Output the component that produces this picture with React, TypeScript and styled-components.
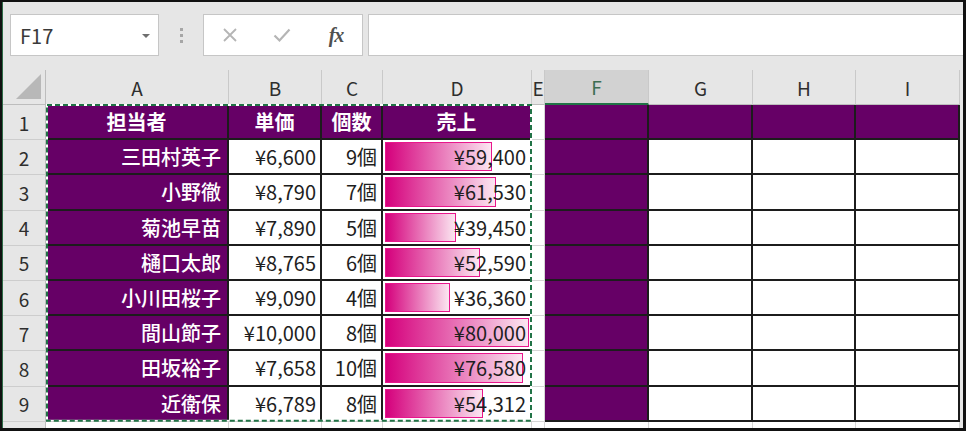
import React from 'react';
import styled, { createGlobalStyle, css } from 'styled-components';

const GlobalStyle = createGlobalStyle`
  html, body { margin: 0; padding: 0; background: #fff; }
  body { font-family: "Noto Sans CJK JP", "Noto Sans", sans-serif; }
`;

const PURPLE = '#660066';
const DARK = '#1c1c1c';
const GREEN = '#217346';

const COLS = [183, 93, 61, 149, 13, 104, 104, 103, 104];
const LETTERS = ['A', 'B', 'C', 'D', 'E', 'F', 'G', 'H', 'I'];
const ROW_H = 35.2;
const HEAD_H = 35;
const ROWHEAD_W = 43;

const rows: [string, number, number, number][] = [
  ['三田村英子', 6600, 9, 59400],
  ['小野徹', 8790, 7, 61530],
  ['菊池早苗', 7890, 5, 39450],
  ['樋口太郎', 8765, 6, 52590],
  ['小川田桜子', 9090, 4, 36360],
  ['間山節子', 10000, 8, 80000],
  ['田坂裕子', 7658, 10, 76580],
  ['近衛保', 6789, 8, 54312],
];

const yen = (n: number) => '¥' + n.toLocaleString('en-US');
const maxSales = Math.max(...rows.map(r => r[3]));
const BAR_MAX = 144;

const Frame = styled.div`
  box-sizing: border-box;
  width: 966px;
  height: 431px;
  border: 2px solid #111;
  border-right-width: 3px;
  border-bottom-width: 3px;
  background: #e6e6e6;
  overflow: hidden;
`;

const Inner = styled.div`
  height: 100%;
  border-left: 1px solid #2d6b47;
  display: flex;
  flex-direction: column;
`;

const Toolbar = styled.div`
  height: 68px;
  flex: none;
  display: flex;
  align-items: flex-start;
  padding: 12px 0 0 7px;
  box-sizing: border-box;
`;

const NameBox = styled.div`
  box-sizing: border-box;
  width: 149px;
  height: 42px;
  background: #fff;
  border: 1px solid #c6c6c6;
  display: flex;
  align-items: center;
  justify-content: space-between;
  padding: 0 8px 0 9px;
  font-size: 20px;
  color: #3a3a3a;
`;

const DropArrow = styled.span`
  width: 0;
  height: 0;
  border-left: 4px solid transparent;
  border-right: 4px solid transparent;
  border-top: 4px solid #6f6f6f;
  margin-top: 2px;
`;

const Grip = styled.div`
  width: 44px;
  height: 42px;
  display: flex;
  flex-direction: column;
  align-items: center;
  justify-content: center;
  gap: 3px;
`;

const GripDot = styled.span`
  width: 3px;
  height: 3px;
  background: #a6a6a6;
`;

const FxBox = styled.div`
  box-sizing: border-box;
  width: 160px;
  height: 42px;
  background: #fff;
  border: 1px solid #c6c6c6;
  display: grid;
  grid-template-columns: repeat(3, 52px);
  align-items: center;
  justify-items: center;
`;

const FxLabel = styled.span`
  font-family: "Liberation Serif", "DejaVu Serif", serif;
  font-style: italic;
  font-weight: bold;
  font-size: 20px;
  color: #505050;
  letter-spacing: -1px;
  margin-left: 4px;
`;

const FormulaInput = styled.div`
  flex: 1;
  height: 42px;
  box-sizing: border-box;
  margin-left: 5px;
  background: #fff;
  border: 1px solid #c6c6c6;
  border-right: none;
`;

const Sheet = styled.div`
  position: relative;
  flex: 1;
  overflow: hidden;
`;

const Grid = styled.div`
  display: grid;
  grid-template-columns: ${ROWHEAD_W}px ${COLS.map(c => c + 'px').join(' ')};
  grid-template-rows: ${HEAD_H}px;
  grid-auto-rows: ${ROW_H}px;
  width: ${ROWHEAD_W + COLS.reduce((a, b) => a + b, 0)}px;
`;

const Corner = styled.div`
  position: relative;
  box-sizing: border-box;
  border-right: 1px solid #bdbdbd;
  border-bottom: 1px solid #bdbdbd;
  &::after {
    content: '';
    position: absolute;
    right: 4px;
    bottom: 5px;
    width: 25px;
    height: 25px;
    background: #b8b8b8;
    clip-path: polygon(100% 0, 100% 100%, 0 100%);
  }
`;

const ColHead = styled.div<{ $selected?: boolean }>`
  box-sizing: border-box;
  display: flex;
  align-items: center;
  justify-content: center;
  overflow: hidden;
  font-size: 19px;
  color: #2e2e2e;
  border-right: 1px solid #c9c9c9;
  border-bottom: 1px solid #bdbdbd;
  ${p =>
    p.$selected &&
    css`
      background: #d2d2d2;
      color: #3d6e52;
      border-bottom: 2px solid ${GREEN};
    `}
`;

const RowHead = styled.div`
  box-sizing: border-box;
  display: flex;
  align-items: center;
  justify-content: center;
  font-size: 19px;
  color: #2e2e2e;
  border-right: 1px solid #bdbdbd;
  border-bottom: 1px solid #cdcdcd;
`;

const Cell = styled.div<{
  $fill: 'purple' | 'white';
  $edge: 'dark' | 'grid';
  $align?: 'left' | 'center' | 'right';
  $weight?: number;
}>`
  position: relative;
  box-sizing: border-box;
  display: flex;
  align-items: center;
  overflow: hidden;
  white-space: nowrap;
  background: ${p => (p.$fill === 'purple' ? PURPLE : '#fff')};
  color: ${p => (p.$fill === 'purple' ? '#fff' : '#1e1e1e')};
  justify-content: ${p =>
    p.$align === 'center' ? 'center' : p.$align === 'right' ? 'flex-end' : 'flex-start'};
  padding-right: ${p => (p.$align === 'right' ? '4px' : '0')};
  font-size: 20px;
  font-weight: ${p => p.$weight ?? 400};
  ${p =>
    p.$edge === 'dark'
      ? css`
          border-right: 2px solid ${DARK};
          border-bottom: 2px solid ${DARK};
        `
      : css`
          border-right: 1px solid #d6d6d6;
          border-bottom: 1px solid #d6d6d6;
        `}
`;

const Bar = styled.div`
  position: absolute;
  left: 2px;
  top: 2px;
  bottom: 2px;
  box-sizing: border-box;
  border: 1px solid #e8168c;
  background: linear-gradient(to right, #d5007c, #fbe6f1);
`;

const BarText = styled.span`
  position: relative;
`;

const Overlay = styled.svg`
  position: absolute;
  left: 0;
  top: 0;
  width: 100%;
  height: 100%;
  pointer-events: none;
`;

const CrossIcon = () => (
  <svg width="16" height="16" viewBox="0 0 16 16">
    <path d="M2 2 L14 14 M14 2 L2 14" stroke="#b5b5b5" strokeWidth="1.8" fill="none" />
  </svg>
);

const CheckIcon = () => (
  <svg width="18" height="16" viewBox="0 0 18 16">
    <path d="M1.5 8.5 L6.5 13.5 L16.5 2.5" stroke="#b5b5b5" strokeWidth="2.2" fill="none" />
  </svg>
);

const App: React.FC = () => {
  const selLeft = ROWHEAD_W + 1;
  const selRight = ROWHEAD_W + COLS[0] + COLS[1] + COLS[2] + COLS[3] - 1;
  const selTop = HEAD_H;
  const selBottom = HEAD_H + 9 * ROW_H - 1;

  return (
    <>
      <GlobalStyle />
      <Frame>
        <Inner>
          <Toolbar>
            <NameBox>
              F17
              <DropArrow />
            </NameBox>
            <Grip>
              <GripDot />
              <GripDot />
              <GripDot />
            </Grip>
            <FxBox>
              <CrossIcon />
              <CheckIcon />
              <FxLabel>fx</FxLabel>
            </FxBox>
            <FormulaInput />
          </Toolbar>
          <Sheet>
            <Grid>
              <Corner />
              {LETTERS.map(l => (
                <ColHead key={l} $selected={l === 'F'}>
                  {l}
                </ColHead>
              ))}

              <RowHead>1</RowHead>
              {['担当者', '単価', '個数', '売上'].map(t => (
                <Cell key={t} $fill="purple" $edge="dark" $align="center" $weight={700}>
                  {t}
                </Cell>
              ))}
              <Cell $fill="white" $edge="grid" />
              {[0, 1, 2, 3].map(i => (
                <Cell key={i} $fill="purple" $edge="dark" />
              ))}

              {rows.map(([name, price, qty, sales], i) => (
                <React.Fragment key={name}>
                  <RowHead>{i + 2}</RowHead>
                  <Cell $fill="purple" $edge="dark" $align="right" $weight={500}>
                    <span style={{ paddingRight: 2 }}>{name}</span>
                  </Cell>
                  <Cell $fill="white" $edge="dark" $align="right">
                    {yen(price)}
                  </Cell>
                  <Cell $fill="white" $edge="dark" $align="right">
                    {qty}個
                  </Cell>
                  <Cell $fill="white" $edge="dark" $align="right">
                    <Bar style={{ width: Math.round((sales / maxSales) * BAR_MAX) }} />
                    <BarText>{yen(sales)}</BarText>
                  </Cell>
                  <Cell $fill="white" $edge="grid" />
                  <Cell $fill="purple" $edge="dark" />
                  <Cell $fill="white" $edge="dark" />
                  <Cell $fill="white" $edge="dark" />
                  <Cell $fill="white" $edge="dark" />
                </React.Fragment>
              ))}

              <RowHead />
              {LETTERS.map(l => (
                <Cell key={l} $fill="white" $edge="grid" />
              ))}
            </Grid>
            <Overlay>
              <rect
                x={selLeft}
                y={selTop}
                width={selRight - selLeft}
                height={selBottom - selTop}
                fill="none"
                stroke="#fff"
                strokeWidth="2"
              />
              <rect
                x={selLeft}
                y={selTop}
                width={selRight - selLeft}
                height={selBottom - selTop}
                fill="none"
                stroke={GREEN}
                strokeWidth="2"
                strokeDasharray="5 3"
              />
            </Overlay>
          </Sheet>
        </Inner>
      </Frame>
    </>
  );
};

export default App;
